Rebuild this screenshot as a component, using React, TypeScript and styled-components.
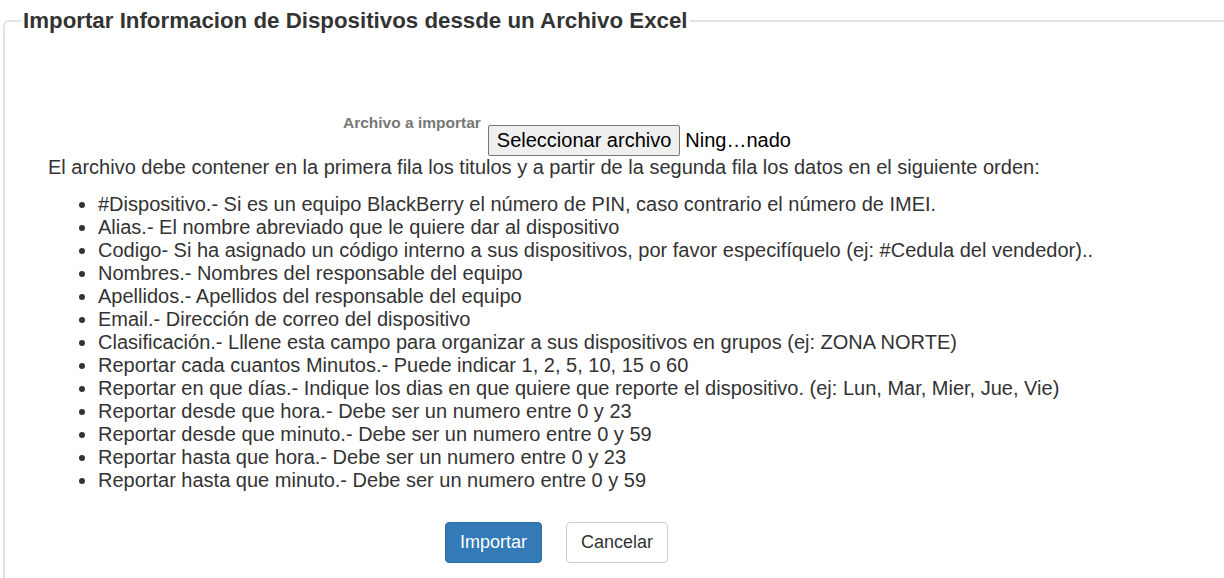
import { createGlobalStyle } from "styled-components";
import styled from "styled-components";

const GlobalStyle = createGlobalStyle`
  html, body {
    margin: 0;
    padding: 0;
    background: #ffffff;
  }
  body {
    font-family: "Liberation Sans", Arial, sans-serif;
    color: #333333;
  }
`;

const Frame = styled.fieldset`
  margin: 8px 0 0 3px;
  padding: 0 16px 40px 16px;
  min-height: 580px;
  box-sizing: border-box;
  border: 2px solid #e3e3e3;
  border-right: none;
  border-bottom: none;
  border-radius: 6px 0 0 0;
`;

const Title = styled.legend`
  padding: 0 2px;
  font-size: 22.3px;
  font-weight: bold;
  line-height: 26px;
  color: #333333;
`;

const UploadRow = styled.div`
  display: flex;
  align-items: flex-start;
  margin: 79px 0 0 322px;
`;

const FieldLabel = styled.label`
  font-size: 15.5px;
  font-weight: bold;
  line-height: 20px;
  color: #777777;
  margin-right: 7px;
`;

const PickButton = styled.button`
  margin-top: 12px;
  height: 31px;
  padding: 0 8px;
  font-family: "Liberation Sans", Arial, sans-serif;
  font-size: 20px;
  color: #000000;
  background: #efefef;
  border: 1px solid #767676;
  border-radius: 2px;
`;

const FileName = styled.span`
  margin: 16px 0 0 5px;
  font-size: 20px;
  line-height: 23px;
  color: #000000;
`;

const Intro = styled.p`
  margin: 0 0 14px 27px;
  font-size: 20px;
  line-height: 23px;
`;

const Fields = styled.ul`
  margin: 0;
  padding-left: 77px;
  font-size: 20px;
  line-height: 23px;
`;

const Actions = styled.div`
  display: flex;
  gap: 24px;
  margin: 30px 0 0 424px;
`;

const ActionButton = styled.button<{ $primary?: boolean }>`
  height: 41px;
  padding: 0 14px;
  font-family: "Liberation Sans", Arial, sans-serif;
  font-size: 18px;
  border-radius: 4px;
  border: 1px solid ${(p) => (p.$primary ? "#2e6da4" : "#cccccc")};
  background: ${(p) => (p.$primary ? "#337ab7" : "#ffffff")};
  color: ${(p) => (p.$primary ? "#ffffff" : "#333333")};
`;

const items = [
  "#Dispositivo.- Si es un equipo BlackBerry el número de PIN, caso contrario el número de IMEI.",
  "Alias.- El nombre abreviado que le quiere dar al dispositivo",
  "Codigo- Si ha asignado un código interno a sus dispositivos, por favor especifíquelo (ej: #Cedula del vendedor)..",
  "Nombres.- Nombres del responsable del equipo",
  "Apellidos.- Apellidos del responsable del equipo",
  "Email.- Dirección de correo del dispositivo",
  "Clasificación.- Lllene esta campo para organizar a sus dispositivos en grupos (ej: ZONA NORTE)",
  "Reportar cada cuantos Minutos.- Puede indicar 1, 2, 5, 10, 15 o 60",
  "Reportar en que días.- Indique los dias en que quiere que reporte el dispositivo. (ej: Lun, Mar, Mier, Jue, Vie)",
  "Reportar desde que hora.- Debe ser un numero entre 0 y 23",
  "Reportar desde que minuto.- Debe ser un numero entre 0 y 59",
  "Reportar hasta que hora.- Debe ser un numero entre 0 y 23",
  "Reportar hasta que minuto.- Debe ser un numero entre 0 y 59",
];

export default function App() {
  return (
    <>
      <GlobalStyle />
      <Frame>
        <Title>Importar Informacion de Dispositivos dessde un Archivo Excel</Title>
        <UploadRow>
          <FieldLabel>Archivo a importar</FieldLabel>
          <PickButton type="button">Seleccionar archivo</PickButton>
          <FileName>Ning…nado</FileName>
        </UploadRow>
        <Intro>
          El archivo debe contener en la primera fila los titulos y a partir de la segunda fila los datos en el
          siguiente orden:
        </Intro>
        <Fields>
          {items.map((t) => (
            <li key={t}>{t}</li>
          ))}
        </Fields>
        <Actions>
          <ActionButton $primary type="button">
            Importar
          </ActionButton>
          <ActionButton type="button">Cancelar</ActionButton>
        </Actions>
      </Frame>
    </>
  );
}
